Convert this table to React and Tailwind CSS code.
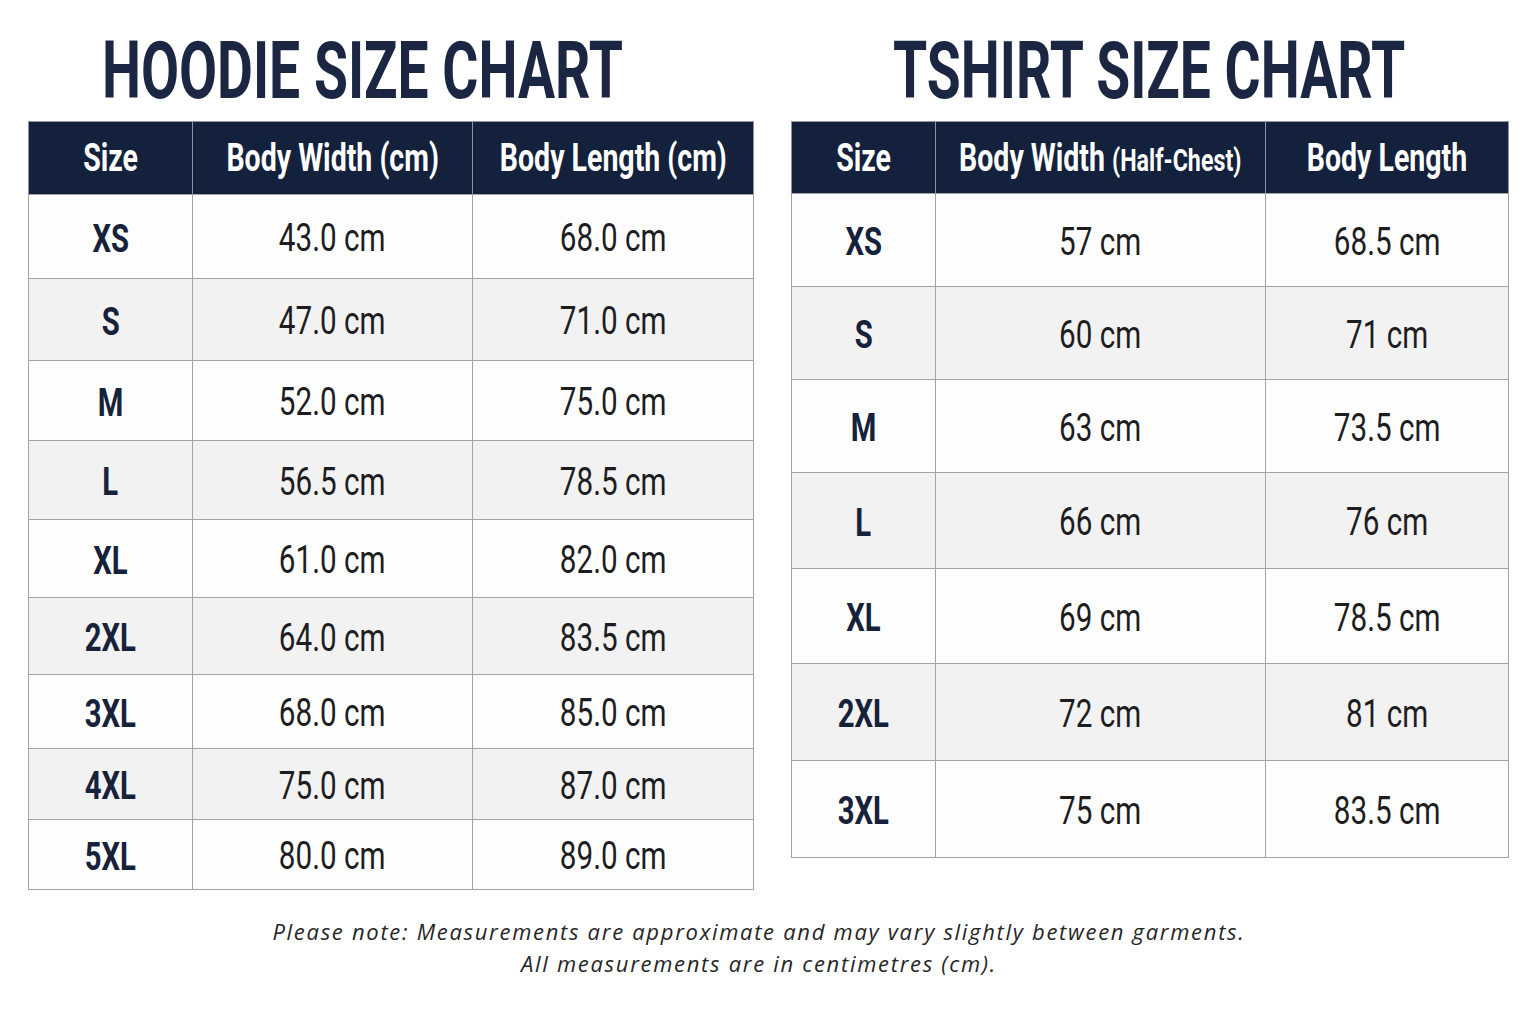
const hoodie = [
  { size: "XS", width: "43.0 cm", length: "68.0 cm", h: "h-[84px]" },
  { size: "S", width: "47.0 cm", length: "71.0 cm", h: "h-[82px]" },
  { size: "M", width: "52.0 cm", length: "75.0 cm", h: "h-[80px]" },
  { size: "L", width: "56.5 cm", length: "78.5 cm", h: "h-[79px]" },
  { size: "XL", width: "61.0 cm", length: "82.0 cm", h: "h-[78px]" },
  { size: "2XL", width: "64.0 cm", length: "83.5 cm", h: "h-[77px]" },
  { size: "3XL", width: "68.0 cm", length: "85.0 cm", h: "h-[74px]" },
  { size: "4XL", width: "75.0 cm", length: "87.0 cm", h: "h-[71px]" },
  { size: "5XL", width: "80.0 cm", length: "89.0 cm", h: "h-[70px]" },
];

const tshirt = [
  { size: "XS", width: "57 cm", length: "68.5 cm", h: "h-[93px]" },
  { size: "S", width: "60 cm", length: "71 cm", h: "h-[93px]" },
  { size: "M", width: "63 cm", length: "73.5 cm", h: "h-[93px]" },
  { size: "L", width: "66 cm", length: "76 cm", h: "h-[96px]" },
  { size: "XL", width: "69 cm", length: "78.5 cm", h: "h-[95px]" },
  { size: "2XL", width: "72 cm", length: "81 cm", h: "h-[97px]" },
  { size: "3XL", width: "75 cm", length: "83.5 cm", h: "h-[97px]" },
];

// condensed look: Roboto squeezed horizontally
const cond = "font-['Roboto','Liberation_Sans',sans-serif] inline-block shrink-0 whitespace-nowrap origin-center";

function Title({ children, className = "" }) {
  return (
    <div className={`h-[100px] flex items-center justify-center ${className}`}>
      <h1 className={`${cond} scale-x-[0.69] text-[80px] font-bold leading-none text-[#1b2642]`}>
        {children}
      </h1>
    </div>
  );
}

function Cell({ children, className }) {
  return (
    <div className="flex justify-center">
      <span className={`${cond} ${className}`}>{children}</span>
    </div>
  );
}

function SizeTable({ rows, cols, head, headerH }) {
  return (
    <table className="w-full table-fixed border-collapse border border-[#9c9c9c]">
      <colgroup>
        {cols.map((c) => (
          <col key={c} className={c} />
        ))}
      </colgroup>
      <thead>
        <tr className={`${headerH} bg-[#14213d]`}>
          {head.map((h, i) => (
            <th key={i} className="border-x border-[#8a93a5] p-0">
              <Cell className="scale-x-[0.75] text-[38px] font-bold leading-none text-white">{h}</Cell>
            </th>
          ))}
        </tr>
      </thead>
      <tbody>
        {rows.map((r, i) => (
          <tr key={r.size} className={`${r.h} ${i % 2 ? "bg-[#f2f2f2]" : "bg-[#fdfdfd]"}`}>
            <td className="border border-[#a3a3a3] p-0 pt-[4px]">
              <Cell className="scale-x-[0.77] text-[38px] font-bold leading-none text-[#16213a]">
                {r.size}
              </Cell>
            </td>
            <td className="border border-[#a3a3a3] p-0 pt-[4px]">
              <Cell className="scale-x-[0.76] text-[39px] leading-none text-[#1d1d1f]">{r.width}</Cell>
            </td>
            <td className="border border-[#a3a3a3] p-0 pt-[4px]">
              <Cell className="scale-x-[0.76] text-[39px] leading-none text-[#1d1d1f]">{r.length}</Cell>
            </td>
          </tr>
        ))}
      </tbody>
    </table>
  );
}

export default function App() {
  return (
    <div className="min-h-screen w-[1536px] bg-white pt-[21px]">
      <div className="flex items-start gap-[38px] px-[28px]">
        {/* Hoodie */}
        <div className="w-[725px]">
          <Title className="pr-[56px]">HOODIE SIZE CHART</Title>
          <SizeTable
            rows={hoodie}
            cols={["w-[164px]", "w-[280px]", "w-[281px]"]}
            headerH="h-[73px]"
            head={["Size", "Body Width (cm)", "Body Length (cm)"]}
          />
        </div>

        {/* T-shirt */}
        <div className="w-[717px]">
          <Title>TSHIRT SIZE CHART</Title>
          <SizeTable
            rows={tshirt}
            cols={["w-[144px]", "w-[330px]", "w-[243px]"]}
            headerH="h-[72px]"
            head={[
              "Size",
              <>
                Body Width <span className="text-[31px]">(Half-Chest)</span>
              </>,
              "Body Length",
            ]}
          />
        </div>
      </div>

      {/* Note */}
      <div className="mt-[25px] pr-[18px] text-center font-['Open_Sans','Lato',sans-serif] text-[22px] italic leading-[32px] tracking-[1.7px] text-[#262626]">
        <p>Please note: Measurements are approximate and may vary slightly between garments.</p>
        <p>All measurements are in centimetres (cm).</p>
      </div>
    </div>
  );
}
